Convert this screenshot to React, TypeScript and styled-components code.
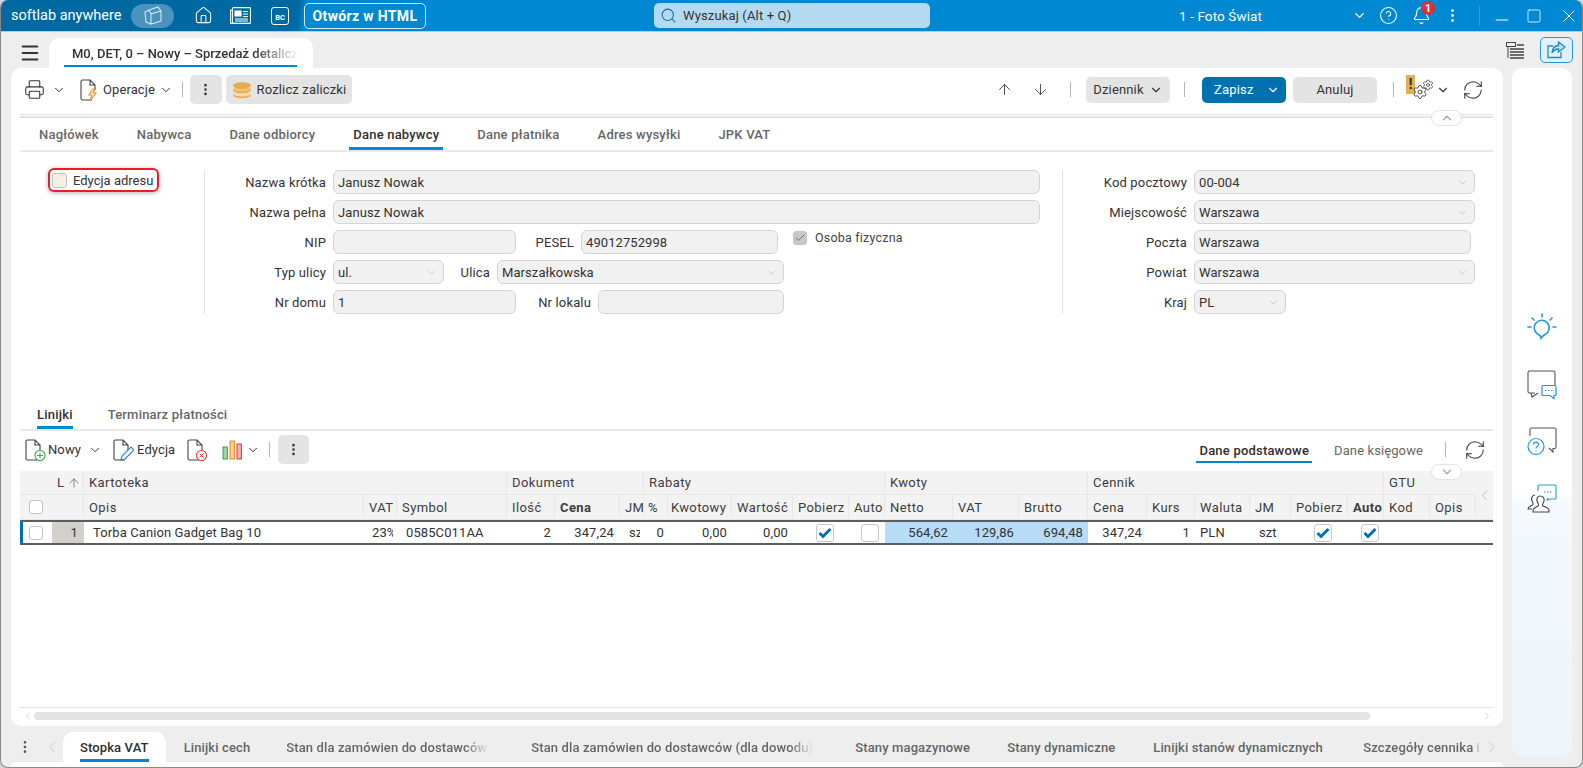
import React from "react";
import styled, { createGlobalStyle, css } from "styled-components";
import {
  ArrowDown, ArrowUp, Bell, Check, ChevronDown, ChevronLeft, ChevronRight, ChevronUp,
  CircleHelp, EllipsisVertical, Home, Menu, Minus, Printer, RefreshCw, Search, Settings, Square, X,
} from "lucide-react";

const Global = createGlobalStyle`
  html, body { margin: 0; padding: 0; height: 768px; overflow: hidden; background: #d4d4d4; }
  body { font-family: Roboto, "Liberation Sans", sans-serif; font-size: 13px; color: #333; }
  * { box-sizing: border-box; }
`;

const Win = styled.div`
  width: 1583px; height: 768px; display: flex; flex-direction: column; overflow: hidden;
  background: #eeeeee; border-radius: 8px; border: 1px solid #8a8a8a; border-top: 0; border-left-width: 1px;
`;
const TitleBar = styled.header`
  height: 32px; flex: none; display: flex; align-items: center; color: #fff; padding-left: 10px;
  background: linear-gradient(97deg, #0069a2 0, #0069a2 296px, #0089d2 304px, #0089d2 100%);
  border-bottom: 1px solid #a9cfe6;
`;
const Brand = styled.span` font-size: 14.5px; width: 120px; white-space: nowrap; `;
const Pill = styled.span`
  width: 43px; height: 24px; border-radius: 12px; background: #4a93bd; display: flex; align-items: center; justify-content: center;
`;
const BarIcon = styled.span<{ $ml: number; $mt?: number }>` display: flex; margin-left: ${p => p.$ml}px; margin-top: ${p => p.$mt ?? 0}px; `;
const BcBox = styled.span`
  margin-left: 20px; width: 18px; height: 18px; border: 1.5px solid #fff; border-radius: 3px; font-size: 7.5px; font-weight: 700;
  display: flex; align-items: flex-end; justify-content: center; padding-bottom: 2px;
`;
const HtmlBtn = styled.span`
  margin-left: 15px; width: 122px; height: 26px; border: 1.5px solid #cfe6f4; border-radius: 5px; font-weight: 700; font-size: 14px;
  display: flex; align-items: center; justify-content: center; letter-spacing: .35px;
`;
const SearchBox = styled.div`
  margin-left: 228px; width: 276px; height: 25px; background: #b4daf1; border-radius: 5px; color: #333; display: flex; align-items: center;
  gap: 6px; padding-left: 6px; font-size: 13px; letter-spacing: .15px;
`;
const Company = styled.span` margin-left: 249px; width: 173px; font-size: 13.5px; letter-spacing: .1px; `;
const BellWrap = styled.span` position: relative; display: flex; margin-left: 14px; `;
const Badge = styled.span`
  position: absolute; top: -5px; right: -4px; width: 14px; height: 14px; border-radius: 50%; background: #d9333f; font-size: 10.5px; font-weight: 700;
  display: flex; align-items: center; justify-content: center; color: #fff;
`;
const TitleSep = styled.span` width: 1px; height: 20px; background: #2aa0df; margin-left: 18px; `;

const TabStrip = styled.div` height: 36px; flex: none; display: flex; align-items: flex-end; padding-left: 18px; `;
const Burger = styled.span` display: flex; align-self: center; margin-top: 6px; color: #333; width: 30px; `;
const DocTab = styled.div`
  width: 264px; height: 30px; background: #fff; border-radius: 10px 10px 0 0; position: relative; display: flex; padding-left: 23px; align-items: center;
  font-size: 13px; font-weight: 500; letter-spacing: 0; color: #333; white-space: nowrap;
  &::after { content: ""; position: absolute; left: 15px; width: 233px; bottom: 1px; height: 2px; background: #0089d2; }
`;
const FadeText = styled.span<{ $w: number; $fade?: number }>`
  display: block; width: ${p => p.$w}px; overflow: hidden; white-space: nowrap;
  -webkit-mask-image: linear-gradient(to right, #000 calc(100% - ${p => p.$fade ?? 25}px), transparent);
  mask-image: linear-gradient(to right, #000 calc(100% - ${p => p.$fade ?? 25}px), transparent);
`;
const StripRight = styled.div` margin-left: auto; margin-right: 9px; display: flex; align-items: center; gap: 16px; align-self: flex-end; height: 32px; padding-bottom: 4px; `;
const ShareBtn = styled.span`
  width: 33px; height: 26px; border: 1px solid #2a97d4; border-radius: 5px; background: #e1f1fa; display: flex; align-items: center; justify-content: center;
`;

const Body = styled.div` flex: 1; display: flex; padding: 0 10px 0 10px; gap: 9px; min-height: 0; `;
const LeftCol = styled.div` width: 1492px; display: flex; flex-direction: column; `;
const Card = styled.main`
  height: 658px; flex: none; background: #fff; border-radius: 10px; padding: 7px 10px 0 9px; display: flex; flex-direction: column; position: relative;
`;
const Toolbar = styled.div` height: 29px; display: flex; align-items: center; flex: none; `;
const Tool = styled.span<{ $ml?: number; $gap?: number }>`
  display: flex; align-items: center; margin-left: ${p => p.$ml ?? 0}px; gap: ${p => p.$gap ?? 0}px; white-space: nowrap; color: #333; letter-spacing: .1px;
`;
const Sep = styled.span<{ $ml: number }>` width: 1px; height: 15px; background: #b5b5b5; margin-left: ${p => p.$ml}px; `;
const GrayBtn = styled.span<{ $w: number; $ml: number; $h?: number }>`
  width: ${p => p.$w}px; height: ${p => p.$h ?? 29}px; margin-left: ${p => p.$ml}px; background: #e4e4e4; border-radius: 5px; display: flex; align-items: center; justify-content: center;
  gap: 5px; color: #333; letter-spacing: .15px; white-space: nowrap; flex: none;
`;
const SaveBtn = styled.span`
  width: 84px; height: 26px; margin-left: 17px; background: #0071ae; color: #fff; border-radius: 5px; display: flex; align-items: center; letter-spacing: .2px; padding-left: 12px; position: relative; flex: none;
`;
const SaveChev = styled.span` position: absolute; right: 6px; top: 6px; display: flex; `;
const Warn = styled.span` position: relative; display: flex; width: 27px; height: 26px; margin-left: 12px; `;
const WarnFlag = styled.span`
  position: absolute; left: 0; top: -2px; width: 9px; height: 19px; background: #e2b24c; color: #333; font-weight: 700; font-size: 15px; line-height: 19px; text-align: center;
`;
const WarnGearA = styled.span` position: absolute; left: 6px; top: 7px; display: flex; color: #444; `;
const WarnGearB = styled.span` position: absolute; left: 16px; top: 2px; display: flex; color: #444; `;

const DoubleRule = styled.div`
  margin-top: 10px; flex: none; height: 4px; border-top: 1px solid #e4e4e4; border-bottom: 2px solid #e4e4e4;
`;
const Collapser = styled.span<{ $top: number }>`
  position: absolute; left: 1420px; top: ${p => p.$top}px; width: 31px; height: 16px; background: #fff; border: 1px solid #e2e2e2; border-radius: 8px; display: flex; align-items: center; justify-content: center; color: #a8a8a8; z-index: 2;
`;
const TabsRow = styled.nav<{ $h: number; $gap: number; $pl: number }>`
  height: ${p => p.$h}px; display: flex; gap: ${p => p.$gap}px; padding-left: ${p => p.$pl}px; border-bottom: 2px solid #e9e9e9; flex: none;
`;
const TabLink = styled.span<{ $active?: boolean; $pad: number }>`
  height: 100%; padding: 0 ${p => p.$pad}px; display: flex; align-items: center; position: relative; font-weight: 500; font-size: 13px; letter-spacing: .2px;
  color: ${p => (p.$active ? "#2f2f2f" : "#666")};
  ${p => p.$active && css`
    &::after { content: ""; position: absolute; left: 0; right: 0; bottom: 0; height: 3px; background: #0089d2; }
  `}
`;
const Form = styled.section` display: flex; height: 144px; margin-top: 18px; flex: none; `;
const FormLeft = styled.div` width: 185px; border-right: 1px solid #e2e2e2; flex: none; padding-left: 28px; `;
const EditBox = styled.label`
  width: 111px; height: 24px; margin-top: -2px; border: 2px solid #ec1c24; border-radius: 6px; display: flex; align-items: center; gap: 6px; padding-left: 2px;
  box-shadow: 0 1px 5px rgba(0,0,0,.3); letter-spacing: 0; color: #333; white-space: nowrap;
`;
const CheckMini = styled.span<{ $bg?: string; $size?: number }>`
  width: ${p => p.$size ?? 14}px; height: ${p => p.$size ?? 14}px; border-radius: 3px; border: 1px solid #c4c4c4; background: ${p => p.$bg ?? "#fff"}; display: flex; align-items: center; justify-content: center; flex: none;
`;
const FormMid = styled.div` width: 858px; border-right: 1px solid #e2e2e2; flex: none; display: flex; flex-direction: column; gap: 6px; `;
const FormRight = styled.div` flex: 1; display: flex; flex-direction: column; gap: 6px; `;
const Row = styled.div` display: flex; align-items: center; height: 24px; `;
const Label = styled.span<{ $w: number }>`
  width: ${p => p.$w}px; text-align: right; flex: none; color: #333; letter-spacing: .15px; white-space: nowrap; padding-right: 7px;
`;
const Input = styled.span<{ $w: number }>`
  width: ${p => p.$w}px; height: 24px; background: #f1f1f1; border: 1px solid #d4d4d4; border-radius: 6px; padding: 0 5px 0 4px; display: flex; align-items: center; justify-content: space-between; flex: none; color: #333; letter-spacing: .08px;
`;
const Osoba = styled.span`
  display: flex; align-items: center; gap: 8px; margin-left: 15px; margin-top: -9px; letter-spacing: .2px; color: #444; font-size: 12.5px;
`;

const Spacer = styled.div` height: 85px; flex: none; `;
const Tool2 = styled(Toolbar)` margin-top: 4px; `;
const Right2 = styled.div` margin-left: auto; display: flex; align-items: center; height: 29px; margin-right: 7px; `;
const MiniTab = styled.span<{ $active?: boolean; $ml: number }>`
  margin-left: ${p => p.$ml}px; padding: 2px 3px 0; height: 26px; display: flex; align-items: center; position: relative; top: 0; font-weight: ${p => (p.$active ? 500 : 400)}; letter-spacing: ${p => (p.$active ? ".2px" : ".1px")}; color: ${p => (p.$active ? "#2f2f2f" : "#666")};
  ${p => p.$active && css`
    &::after { content: ""; position: absolute; left: 0; right: 0; bottom: 0; height: 2px; background: #0089d2; }
  `}
`;

const cols = "32px 13px 19px 280px 33px 110px 48px 65px 24px 24px 64px 61px 56px 36px 68px 66px 69px 59px 48px 55px 41px 57px 36px 46px 46px 17px";
const Table = styled.div` margin-top: 7px; flex: 1; min-height: 0; display: flex; flex-direction: column; position: relative; `;
const HeadGrid = styled.div`
  display: grid; grid-template-columns: ${cols}; grid-template-rows: 24px 25px; background: #f3f3f3; flex: none; height: 49px;
`;
const Cell = styled.div<{ $s?: number; $r?: number; $nob?: boolean; $bold?: boolean; $pl?: number }>`
  grid-column-end: span ${p => p.$s ?? 1};
  ${p => p.$r && css`grid-row-end: span ${p.$r};`}
  display: flex; align-items: center; padding-left: ${p => p.$pl ?? 5}px; overflow: hidden; white-space: nowrap;
  font-weight: ${p => (p.$bold ? 700 : 400)}; letter-spacing: .42px; color: #3d3d3d;
  border-right: ${p => (p.$nob ? "0" : "1px solid #e7e7e7")};
  border-bottom: 1px solid #e7e7e7;
`;
const DataGrid = styled.div`
  display: grid; grid-template-columns: ${cols}; height: 25px; border-top: 2px solid #595e62; border-bottom: 2px solid #595e62; flex: none; color: #333; letter-spacing: .1px;
`;
const DCell = styled.div<{ $s?: number; $right?: boolean; $bg?: string; $pl?: number; $pr?: number; $center?: boolean }>`
  grid-column-end: span ${p => p.$s ?? 1};
  display: flex; align-items: center; overflow: hidden; white-space: nowrap; background: ${p => p.$bg ?? "transparent"};
  justify-content: ${p => (p.$right ? "flex-end" : p.$center ? "center" : "flex-start")};
  padding-left: ${p => p.$pl ?? 0}px; padding-right: ${p => p.$pr ?? 0}px;
`;
const Clip = styled.span<{ $w: number }>` display: block; width: ${p => p.$w}px; overflow: hidden; flex: none; `;
const SelectCell = styled(DCell)` border-left: 3px solid #0071ae; padding-left: 6px; `;
const CheckBig = styled.span`
  width: 18px; height: 18px; border: 1px solid #c8c8c8; border-radius: 3px; background: #fff; display: flex; align-items: center; justify-content: center; color: #0071ae;
`;
const ScrollArea = styled.div`
  margin-top: auto; height: 15px; padding: 2px 0 0 2px; border-top: 1px solid #e4e4e4; display: flex; align-items: center; color: #c4c4c4; flex: none;
`;
const Track = styled.span` width: 1336px; height: 8px; border-radius: 4px; background: #e4e4e4; `;
const TrackEnd = styled.span` margin-left: auto; display: flex; `;
const Tail = styled.div` height: 4px; flex: none; `;

const BottomTabs = styled.div` margin-top: 6px; height: 30px; display: flex; align-items: center; flex: none; position: relative; padding-left: 6px; color: #666; `;
const BottomArrow = styled.span<{ $ml: number }>` display: flex; margin-left: ${p => p.$ml}px; color: #c4c4c4; flex: none; `;
const BottomMenu = styled.span` display: flex; flex: none; color: #555; `;
const BTab = styled.span<{ $active?: boolean; $ml?: number }>`
  height: 30px; padding: 0 17px; display: flex; align-items: center; white-space: nowrap; flex: none; position: relative; font-weight: 500; letter-spacing: .12px;
  margin-left: ${p => p.$ml ?? 0}px; color: ${p => (p.$active ? "#2f2f2f" : "#666")};
  ${p => p.$active && css`
    background: #fff; border-radius: 10px 10px 0 0;
    &::after { content: ""; position: absolute; left: 17px; right: 17px; bottom: 0; height: 3px; background: #0089d2; }
  `}
`;
const BLabel = styled.span<{ $w: number }>` display: block; width: ${p => p.$w}px; `;
const LowerCard = styled.div` flex: 1; background: #fff; border-radius: 6px 6px 0 0; `;
const SidePanel = styled.aside`
  width: 60px; height: 688px; flex: none; border-radius: 10px; background: linear-gradient(to bottom, #fff 0, #fff 420px, #f4f9fd 440px, #edf5fb 100%);
  display: flex; flex-direction: column; align-items: center; padding-top: 245px; gap: 27px; position: relative;
`;

const Doc = ({ children }: { children?: React.ReactNode }) => (
  <svg width="22" height="24" viewBox="0 0 22 24" fill="none">
    <path d="M13 22H3.500A1.500 1.500 0 0 1 2 20.500v-17A1.500 1.500 0 0 1 3.500 2H11l5 5v5M11 2v5h5" stroke="#444" strokeWidth="1.1" />
    {children}
  </svg>
);

const Coins = () => (
  <svg width="20" height="18" viewBox="0 0 20 18">
    <ellipse cx="10" cy="14" rx="9" ry="3.2" fill="#e9a94e" /><ellipse cx="10" cy="13" rx="9" ry="2.6" fill="#f6d9a6" />
    <ellipse cx="10" cy="9" rx="9" ry="3.2" fill="#e9a94e" /><ellipse cx="10" cy="8" rx="9" ry="2.6" fill="#efc07a" />
    <ellipse cx="10" cy="4.500" rx="9" ry="3.2" fill="#e9a94e" />
  </svg>
);
const Bars = () => (
  <svg width="21" height="22" viewBox="0 0 21 22" fill="none">
    <rect x="1" y="8" width="4.400" height="12" fill="#9fd5a5" stroke="#38a248" />
    <rect x="8" y="2" width="4.400" height="18" fill="#f8cf9a" stroke="#e88a1d" />
    <rect x="15" y="5" width="4.400" height="15" fill="#f3aeae" stroke="#d83a3a" />
  </svg>
);
const Cubes = () => (
  <svg width="22" height="20" viewBox="0 0 22 20" fill="none" stroke="#d5e8f3" strokeWidth="1.1">
    <path d="M9 18V8l10-3v10zM9 8 7 4l9-3 3 4M7 4 3 6l1 10 5 2" />
  </svg>
);
const News = () => (
  <svg width="21" height="17" viewBox="0 0 21 17" fill="none" stroke="#fff" strokeWidth="1.1">
    <rect x="2.500" y=".6" width="18" height="15.800" rx="1" /><path d="M2.500 3H.6v13.400h2" />
    <rect x="5" y="4" width="6" height="5" fill="#fff" /><path d="M13 4.500h5M13 7h5M13 9.500h5M5 12h13M5 14h13" />
  </svg>
);
const ListIco = () => (
  <svg width="18" height="17" viewBox="0 0 18 17" fill="none" stroke="#444">
    <rect x=".5" y=".5" width="9" height="4" /><path d="M2 5v11" /><path d="M11 3h7M4 7h14M4 10h14M4 13h14M4 16h14" strokeWidth="1.4" />
  </svg>
);
const ShareIco = () => (
  <svg width="20" height="18" viewBox="0 0 20 18" fill="none" stroke="#2387c0" strokeWidth="1.3">
    <path d="M14 11v5.500H1V5h5" /><path d="M11.500 1 18 6l-6.500 5V8c-3.500 0-5 1.200-6.500 4 .3-4.500 2.800-7.500 6.500-7.500z" fill="#bfe0f3" />
  </svg>
);
const Bulb = () => (
  <svg width="30" height="30" viewBox="0 0 30 30" fill="none" stroke="#1e9be0" strokeWidth="1.6" strokeLinecap="round">
    <path d="M14 25c0-2-1-3-3.500-4a7.500 7.500 0 1 1 8 .2c-2 1-3 2-4.500 3.800z" /><path d="M15 1v3M5 5l2 2M25 5l-2 2M1 14h3M26 14h3" />
  </svg>
);
const ChatA = () => (
  <svg width="30" height="30" viewBox="0 0 30 30" fill="none">
    <path d="M8 23H2.500A1.500 1.500 0 0 1 1 21.500V2.500A1.500 1.500 0 0 1 2.500 1h24A1.500 1.500 0 0 1 28 2.500V15M4 23l1 4 6-4" stroke="#555" strokeWidth="1.1" />
    <path d="M15 16.500a1 1 0 0 1 1-1h12a1 1 0 0 1 1 1v8a1 1 0 0 1-1 1h-1v3l-4-3h-7a1 1 0 0 1-1-1z" fill="#fff" stroke="#1e9be0" strokeWidth="1.2" />
    <path d="M18 20.500h1.500M21 20.500h1.500M24 20.500h1.500" stroke="#1e9be0" strokeWidth="1.2" />
  </svg>
);
const ChatQ = () => (
  <svg width="30" height="30" viewBox="0 0 30 30" fill="none">
    <path d="M3 9V2.500A1.500 1.500 0 0 1 4.500 1h23A1.500 1.500 0 0 1 29 2.500V20a1.500 1.500 0 0 1-1.500 1.500H26V25l-4-4" stroke="#555" strokeWidth="1.1" />
    <circle cx="9" cy="19.500" r="8" fill="#fff" stroke="#1e9be0" strokeWidth="1.2" />
    <path d="M6.500 17.500c0-3.300 5-3.300 5 0 0 2-2.500 2-2.500 4M9 23v.5" stroke="#1e9be0" strokeWidth="1.2" />
  </svg>
);
const ChatP = () => (
  <svg width="30" height="30" viewBox="0 0 30 30" fill="none">
    <path d="M11 7V2a1 1 0 0 1 1-1h16a1 1 0 0 1 1 1v12a1 1 0 0 1-1 1h-4l-4 1 1-2" stroke="#1e9be0" strokeWidth="1.1" />
    <path d="M17 8h1.500M20 8h1.500M23 8h1.500" stroke="#1e9be0" strokeWidth="1.1" />
    <path d="M13 12c3 0 4.500 2 4 5-.3 2-2 3-1.500 4.500.4 1.200 6.500 1 6.500 5.500v1H6v-1c0-4 5-4.500 5.500-5.500.7-1.500-1-2.500-1.500-4.500-.5-3 1-5 3-5z" fill="#fff" stroke="#444" strokeWidth="1.1" />
    <path d="M8 11c-3 .5-4 3-3 6 .3 1.500 1.500 2 1 3.500C5 22 1 22 1 25h4" stroke="#444" strokeWidth="1.1" />
  </svg>
);
const Tick = () => (
  <svg width="14" height="12" viewBox="0 0 14 12"><path d="M1.500 6 5 9.500 12.500 2" stroke="#0071ae" strokeWidth="3" fill="none" /></svg>
);
const Caret = () => <ChevronDown size={13} strokeWidth={1} color="#aaa" />;

export default function App() {
  return (
    <>
      <Global />
      <Win>
        <TitleBar>
          <Brand>softlab anywhere</Brand>
          <Pill><Cubes /></Pill>
          <BarIcon $ml={20}><Home size={19} strokeWidth={1.3} /></BarIcon>
          <BarIcon $ml={17}><News /></BarIcon>
          <BcBox>BC</BcBox>
          <HtmlBtn>Otwórz w HTML</HtmlBtn>
          <SearchBox><Search size={17} strokeWidth={1.5} color="#1b6f9f" />Wyszukaj (Alt + Q)</SearchBox>
          <Company>1 - Foto Świat</Company>
          <ChevronDown size={15} strokeWidth={2.2} />
          <BarIcon $ml={12}><CircleHelp size={19} strokeWidth={1.3} /></BarIcon>
          <BellWrap><Bell size={19} strokeWidth={1.4} /><Badge>1</Badge></BellWrap>
          <BarIcon $ml={13}><EllipsisVertical size={17} strokeWidth={2} /></BarIcon>
          <TitleSep />
          <BarIcon $ml={12} $mt={8}><Minus size={20} strokeWidth={1.2} /></BarIcon>
          <BarIcon $ml={14}><Square size={16} strokeWidth={1.2} /></BarIcon>
          <BarIcon $ml={17}><X size={20} strokeWidth={1.2} /></BarIcon>
        </TitleBar>
        <TabStrip>
          <Burger><Menu size={22} strokeWidth={2.2} /></Burger>
          <DocTab><FadeText $w={227} $fade={45}>M0, DET, 0 – Nowy – Sprzedaż detaliczna</FadeText></DocTab>
          <StripRight><ListIco /><ShareBtn><ShareIco /></ShareBtn></StripRight>
        </TabStrip>
        <Body>
          <LeftCol>
            <Card>
              <Toolbar>
                <Tool $ml={4}><Printer size={21} strokeWidth={1.2} color="#333" /></Tool>
                <Tool $ml={7}><ChevronDown size={14} strokeWidth={1.7} /></Tool>
                <Tool $ml={13} $gap={2}><Doc><path d="M14 11l-4 6h3l-2 6 6-8h-3l2-4z" fill="#fff" stroke="#ee8a25" strokeWidth="1.1" /></Doc>Operacje</Tool>
                <Tool $ml={4}><ChevronDown size={14} strokeWidth={1.7} /></Tool>
                <Sep $ml={9} />
                <GrayBtn $w={32} $ml={7}><EllipsisVertical size={15} strokeWidth={2.2} /></GrayBtn>
                <GrayBtn $w={126} $ml={4}><Coins />Rozlicz zaliczki</GrayBtn>
                <Tool $ml={644}><ArrowUp size={17} strokeWidth={1.2} /></Tool>
                <Tool $ml={19}><ArrowDown size={17} strokeWidth={1.2} /></Tool>
                <Sep $ml={21} />
                <GrayBtn $w={84} $ml={15} $h={26}>Dziennik <ChevronDown size={14} strokeWidth={1.9} /></GrayBtn>
                <Sep $ml={14} />
                <SaveBtn>Zapisz<SaveChev><ChevronDown size={14} strokeWidth={2} /></SaveChev></SaveBtn>
                <GrayBtn $w={84} $ml={7} $h={26}>Anuluj</GrayBtn>
                <Sep $ml={16} />
                <Warn>
                  <WarnFlag>!</WarnFlag>
                  <WarnGearA><Settings size={16} strokeWidth={1.4} /></WarnGearA>
                  <WarnGearB><Settings size={12} strokeWidth={1.6} /></WarnGearB>
                </Warn>
                <Tool $ml={3}><ChevronDown size={14} strokeWidth={1.9} /></Tool>
                <Tool $ml={12}><RefreshCw size={22} strokeWidth={1.1} /></Tool>
              </Toolbar>
              <DoubleRule />
              <Collapser $top={42}><ChevronUp size={14} strokeWidth={2.4} /></Collapser>
              <TabsRow $h={34} $gap={30} $pl={15}>
                <TabLink $pad={4}>Nagłówek</TabLink>
                <TabLink $pad={4}>Nabywca</TabLink>
                <TabLink $pad={4}>Dane odbiorcy</TabLink>
                <TabLink $pad={4} $active>Dane nabywcy</TabLink>
                <TabLink $pad={4}>Dane płatnika</TabLink>
                <TabLink $pad={4}>Adres wysyłki</TabLink>
                <TabLink $pad={4}>JPK VAT</TabLink>
              </TabsRow>
              <Form>
                <FormLeft>
                  <EditBox><CheckMini $bg="#f6f0e0" $size={15} />Edycja adresu</EditBox>
                </FormLeft>
                <FormMid>
                  <Row><Label $w={128}>Nazwa krótka</Label><Input $w={707}>Janusz Nowak</Input></Row>
                  <Row><Label $w={128}>Nazwa pełna</Label><Input $w={707}>Janusz Nowak</Input></Row>
                  <Row>
                    <Label $w={128}>NIP</Label><Input $w={183} />
                    <Label $w={65}>PESEL</Label><Input $w={197}>49012752998</Input>
                    <Osoba><CheckMini $bg="#c8c8c8" $size={14}><Check size={12} color="#666" strokeWidth={1.8} /></CheckMini>Osoba fizyczna</Osoba>
                  </Row>
                  <Row>
                    <Label $w={128}>Typ ulicy</Label><Input $w={111}>ul.<Caret /></Input>
                    <Label $w={53}>Ulica</Label><Input $w={287}>Marszałkowska<Caret /></Input>
                  </Row>
                  <Row>
                    <Label $w={128}>Nr domu</Label><Input $w={183}>1</Input>
                    <Label $w={82}>Nr lokalu</Label><Input $w={186} />
                  </Row>
                </FormMid>
                <FormRight>
                  <Row><Label $w={131}>Kod pocztowy</Label><Input $w={281}>00-004<Caret /></Input></Row>
                  <Row><Label $w={131}>Miejscowość</Label><Input $w={281}>Warszawa<Caret /></Input></Row>
                  <Row><Label $w={131}>Poczta</Label><Input $w={277}>Warszawa</Input></Row>
                  <Row><Label $w={131}>Powiat</Label><Input $w={281}>Warszawa<Caret /></Input></Row>
                  <Row><Label $w={131}>Kraj</Label><Input $w={92}>PL<Caret /></Input></Row>
                </FormRight>
              </Form>
              <Spacer />
              <TabsRow $h={32} $gap={35} $pl={17}>
                <TabLink $pad={0} $active>Linijki</TabLink>
                <TabLink $pad={0}>Terminarz płatności</TabLink>
              </TabsRow>
              <Tool2>
                <Tool $ml={4} $gap={2}><Doc><circle cx="16" cy="17.500" r="5" fill="#fff" stroke="#2fa84f" strokeWidth="1.1" /><path d="M16 14.500v6M13 17.500h6" stroke="#2fa84f" /></Doc>Nowy</Tool>
                <Tool $ml={7}><ChevronDown size={14} strokeWidth={1.7} /></Tool>
                <Tool $ml={10} $gap={3}><Doc><path d="M9 22l1-4 9-9 3 3-9 9z" fill="#fff" stroke="#2f80c8" strokeWidth="1.1" /></Doc>Edycja</Tool>
                <Tool $ml={11}><Doc><circle cx="15.500" cy="17.500" r="5" fill="#fff" stroke="#e23b3b" strokeWidth="1.1" /><path d="M13.500 15.500l4 4M17.500 15.500l-4 4" stroke="#e23b3b" /></Doc></Tool>
                <Tool $ml={14}><Bars /></Tool>
                <Tool $ml={3}><ChevronDown size={14} strokeWidth={1.7} /></Tool>
                <Sep $ml={9} />
                <GrayBtn $w={31} $ml={8}><EllipsisVertical size={15} strokeWidth={2.2} /></GrayBtn>
                <Right2>
                  <MiniTab $active $ml={0}>Dane podstawowe</MiniTab>
                  <MiniTab $ml={19}>Dane księgowe</MiniTab>
                  <Sep $ml={19} />
                  <Tool $ml={18}><RefreshCw size={22} strokeWidth={1.1} /></Tool>
                </Right2>
              </Tool2>
              <Collapser $top={396}><ChevronDown size={14} strokeWidth={2.4} /></Collapser>
              <Table>
                <HeadGrid>
                  <Cell $nob />
                  <Cell $nob>L</Cell>
                  <Cell $pl={2}><ArrowUp size={14} strokeWidth={1.5} color="#777" /></Cell>
                  <Cell $s={3}>Kartoteka</Cell>
                  <Cell $s={3}>Dokument</Cell>
                  <Cell $s={5}>Rabaty</Cell>
                  <Cell $s={3}>Kwoty</Cell>
                  <Cell $s={6}>Cennik</Cell>
                  <Cell $s={2} $nob>GTU</Cell>
                  <Cell $r={2} $pl={0} $nob><ChevronLeft size={17} strokeWidth={1.3} color="#bbb" /></Cell>
                  <Cell $pl={9} $nob><CheckMini $size={14} /></Cell>
                  <Cell $s={2} />
                  <Cell>Opis</Cell>
                  <Cell>VAT</Cell>
                  <Cell>Symbol</Cell>
                  <Cell>Ilość</Cell>
                  <Cell $bold>Cena</Cell>
                  <Cell>JM</Cell>
                  <Cell $pl={4}>%</Cell>
                  <Cell $pl={3}>Kwotowy</Cell>
                  <Cell>Wartość</Cell>
                  <Cell>Pobierz</Cell>
                  <Cell>Auto</Cell>
                  <Cell>Netto</Cell>
                  <Cell>VAT</Cell>
                  <Cell>Brutto</Cell>
                  <Cell>Cena</Cell>
                  <Cell>Kurs</Cell>
                  <Cell>Waluta</Cell>
                  <Cell>JM</Cell>
                  <Cell>Pobierz</Cell>
                  <Cell $bold>Auto</Cell>
                  <Cell>Kod</Cell>
                  <Cell>Opis</Cell>
                </HeadGrid>
                <DataGrid>
                  <SelectCell><CheckMini $size={14} /></SelectCell>
                  <DCell $s={2} $right $pr={6} $bg="#d3d0ca">1</DCell>
                  <DCell $pl={9}>Torba Canion Gadget Bag 10</DCell>
                  <DCell $pl={8}><Clip $w={21}>23%</Clip></DCell>
                  <DCell $pl={9}>0585C011AA</DCell>
                  <DCell $right $pr={4}>2</DCell>
                  <DCell $right $pr={6}>347,24</DCell>
                  <DCell $pl={9}><Clip $w={11}>szt</Clip></DCell>
                  <DCell $right $pr={4}>0</DCell>
                  <DCell $right $pr={5}>0,00</DCell>
                  <DCell $right $pr={5}>0,00</DCell>
                  <DCell $center $pl={7}><CheckBig><Tick /></CheckBig></DCell>
                  <DCell $center $pl={6}><CheckBig /></DCell>
                  <DCell $right $pr={5} $bg="#b6dcf7">564,62</DCell>
                  <DCell $right $pr={5} $bg="#b6dcf7">129,86</DCell>
                  <DCell $right $pr={5} $bg="#b6dcf7">694,48</DCell>
                  <DCell $right $pr={5}>347,24</DCell>
                  <DCell $right $pr={5}>1</DCell>
                  <DCell $pl={5}>PLN</DCell>
                  <DCell $pl={9}>szt</DCell>
                  <DCell $center $pl={7}><CheckBig><Tick /></CheckBig></DCell>
                  <DCell $center $pl={7}><CheckBig><Tick /></CheckBig></DCell>
                  <DCell /><DCell /><DCell />
                </DataGrid>
                <ScrollArea>
                  <ChevronLeft size={12} strokeWidth={1.3} />
                  <Track />
                  <TrackEnd><ChevronRight size={12} strokeWidth={1.3} /></TrackEnd>
                </ScrollArea>
              </Table>
              <Tail />
            </Card>
            <BottomTabs>
              <BottomMenu><EllipsisVertical size={16} strokeWidth={2} /></BottomMenu>
              <BottomArrow $ml={10}><ChevronLeft size={18} strokeWidth={1.1} /></BottomArrow>
              <BTab $active $ml={2}>Stopka VAT</BTab>
              <BTab $ml={1}>Linijki cech</BTab>
              <BTab $ml={2}><FadeText $w={203}>Stan dla zamówien do dostawców do dowodu</FadeText></BTab>
              <BTab $ml={8}><FadeText $w={283}>Stan dla zamówien do dostawców (dla dowodu)</FadeText></BTab>
              <BTab $ml={7}><BLabel $w={116}>Stany magazynowe</BLabel></BTab>
              <BTab $ml={2}><BLabel $w={109}>Stany dynamiczne</BLabel></BTab>
              <BTab $ml={3}><BLabel $w={171}>Linijki stanów dynamicznych</BLabel></BTab>
              <BTab $ml={5}><FadeText $w={117} $fade={6}>Szczegóły cennika i rabatów</FadeText></BTab>
              <BottomArrow $ml={-14}><ChevronRight size={18} strokeWidth={1.1} /></BottomArrow>
            </BottomTabs>
            <LowerCard />
          </LeftCol>
          <SidePanel>
            <Bulb /><ChatA /><ChatQ /><ChatP />
          </SidePanel>
        </Body>
      </Win>
    </>
  );
}
